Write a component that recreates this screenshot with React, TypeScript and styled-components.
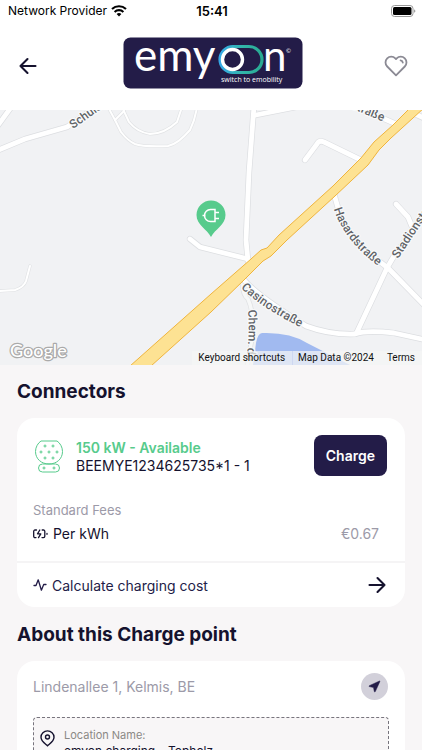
import React from "react";
import styled, { createGlobalStyle } from "styled-components";

const navy = "#231c48";
const ink = "#15122e";
const green = "#57cb8c";
const muted = "#9c9aa8";

const GlobalStyle = createGlobalStyle`
  *, *::before, *::after { box-sizing: border-box; }
  body { margin: 0; background: #f8f6f7; font-family: Inter, "Liberation Sans", sans-serif; color: ${ink}; }
  button { font: inherit; color: inherit; border: 0; background: none; padding: 0; cursor: pointer; }
  h1, h2, p, dl, dt, dd { margin: 0; font-weight: inherit; }
  svg { display: block; }
`;

const Screen = styled.div`
  display: flex;
  flex-direction: column;
  height: 100vh;
  overflow: hidden;
`;

const StatusBar = styled.div`
  display: grid;
  grid-template-columns: 1fr auto 1fr;
  align-items: center;
  height: 22px;
  padding: 0 6px 0 8px;
  background: #fff;
  color: #000;
  font-size: 12px;
  line-height: 22px;
`;

const Carrier = styled.div`
  display: flex;
  align-items: center;
  gap: 4px;
`;

const Clock = styled.time`
  font-size: 13px;
  font-weight: 600;
`;

const BatterySlot = styled.div`
  justify-self: end;
`;

const TopBar = styled.header`
  display: flex;
  flex: none;
  align-items: flex-start;
  justify-content: space-between;
  height: 88px;
  padding: 15px 13px 0 15px;
  background: #fff;
`;

const Brand = styled.div`
  margin-left: 2px;
`;

const IconButton = styled.button<{ $tone?: string }>`
  display: grid;
  place-items: center;
  width: 26px;
  height: 57px;
  color: ${(p) => p.$tone ?? ink};
`;

const Content = styled.main`
  flex: 1;
  min-height: 0;
  overflow: auto;
  scrollbar-width: none;
`;

const MapFrame = styled.section`
  position: relative;
  height: 255px;
  background: #f1f2f4;

  > svg { width: 100%; height: 100%; }
`;

const Attribution = styled.div`
  position: absolute;
  right: 0;
  bottom: 0;
  display: flex;
  height: 14px;
  font: 10px/14px Roboto, sans-serif;
  color: #111;
`;

const MapNote = styled.div<{ $divided?: boolean }>`
  padding: 0 7px 0 5px;
  background: rgba(245, 245, 245, 0.72);
  border-left: 1px solid ${(p) => (p.$divided ? "rgba(200, 210, 240, 0.7)" : "transparent")};
  white-space: nowrap;

  a { color: inherit; text-decoration: none; }
  button { line-height: 14px; }
`;

const Section = styled.section`
  padding: 0 17px 1px;
`;

const Heading = styled.h2`
  padding: 15px 0 14px;
  font-size: 19px;
  font-weight: 700;
  line-height: 24px;
`;

const Card = styled.div`
  background: #fff;
  border-radius: 18px;
`;

const CardBody = styled.div`
  padding: 17px 18px 13px 16px;
`;

const ConnectorRow = styled.div`
  display: flex;
  align-items: center;
  gap: 10px;
`;

const ConnectorInfo = styled.div`
  flex: 1;
  margin-left: 1px;
  padding-top: 2px;
  font-size: 14px;
  line-height: 18px;
  white-space: nowrap;
`;

const Availability = styled.p`
  color: ${green};
  font-weight: 600;
`;

const ChargeButton = styled.button`
  height: 41px;
  padding: 0 12px;
  border-radius: 8px;
  background: ${navy};
  color: #fff;
  font-size: 14px;
  font-weight: 600;
`;

const Fees = styled.div`
  padding-top: 24px;
  font-size: 14px;
  line-height: 20px;
`;

const FeesTitle = styled.p`
  color: ${muted};
  font-size: 13px;
`;

const FeeRow = styled.dl`
  display: flex;
  align-items: center;
  justify-content: space-between;
  height: 28px;
  padding-right: 8px;

  dt { display: flex; align-items: center; gap: 5px; }
  dd { color: ${muted}; }
`;

const CalculateButton = styled.button`
  display: flex;
  align-items: center;
  gap: 5px;
  width: 100%;
  height: 46px;
  padding: 0 18px 0 16px;
  border-top: 2px solid #f5f4f5;
  color: ${navy};
  font-size: 14px;
  text-align: left;

  span { flex: 1; }
`;

const AddressRow = styled.div`
  display: flex;
  align-items: center;
  justify-content: space-between;
  padding: 12px 17px 17px 16px;
  color: ${muted};
  font-size: 14px;
`;

const NavigateButton = styled.button`
  display: grid;
  place-items: center;
  width: 27px;
  height: 27px;
  border-radius: 50%;
  background: #d2d0da;
  color: ${navy};
`;

const LocationBox = styled.div`
  display: flex;
  gap: 9px;
  margin: 0 16px 16px;
  padding: 9px 6px;
  border: 1px dashed #77747d;
  border-radius: 4px;
  background: #f8f6f7;
  font-size: 12px;
  line-height: 16px;

  svg { margin-top: 3px; }
  dt { color: #8b8985; font-size: 11px; }
`;

const Wifi = () => (
  <svg width="16" height="12" viewBox="0 0 16 12" fill="none" stroke="#000" strokeWidth="2.1" aria-hidden="true">
    <path d="M1 4.1a10.2 10.2 0 0 1 14 0M3.6 6.9a6.4 6.4 0 0 1 8.8 0" />
    <path d="M5.6 9.1a3.7 3.7 0 0 1 4.8 0L8 11.6z" fill="#000" stroke="none" />
  </svg>
);

const Battery = () => (
  <svg width="25" height="12" viewBox="0 0 25 12" aria-hidden="true">
    <rect x="0.5" y="0.5" width="21.5" height="11" rx="3" fill="none" stroke="#999" />
    <rect x="2" y="2" width="18.5" height="8" rx="1.5" />
    <path d="M23.3 4.2q2 1.8 0 3.6z" fill="#777" />
  </svg>
);

const Arrow = ({ back = false }: { back?: boolean }) => (
  <svg width="20" height="20" viewBox="0 0 20 20" fill="none" stroke={ink} strokeWidth="2.1" strokeLinecap="round" strokeLinejoin="round" aria-hidden="true">
    <path d={back ? "M17.5 10H2.5M9.5 3L2.5 10l7 7" : "M2.5 10h15M10.5 3l7 7-7 7"} />
  </svg>
);

const Heart = () => (
  <svg width="24" height="22" viewBox="0 0 24 22" fill="none" stroke="#8b8a94" strokeWidth="1.8" strokeLinecap="round" strokeLinejoin="round" aria-hidden="true">
    <path d="M12 20.3L3.2 11.5a5.7 5.7 0 0 1 0-8.1 5.7 5.7 0 0 1 8.1 0L12 4.1l.7-.7a5.7 5.7 0 0 1 8.1 8.1z" />
    <path d="M16.6 5.3a2.6 2.6 0 0 1 2.2 2.3" />
  </svg>
);

const Logo = () => (
  <svg width="180" height="52" viewBox="0 0 180 52" role="img" aria-label="emyoon, switch to emobility">
    <defs>
      <linearGradient id="loop" x1="0" x2="1">
        <stop offset="0" stopColor="#35a8e6" />
        <stop offset="0.55" stopColor="#32b6a9" />
        <stop offset="1" stopColor="#28aa92" />
      </linearGradient>
    </defs>
    <rect x="0.5" y="0.5" width="179" height="51" rx="7" fill={navy} />
    <g fill="#fff" fontFamily="Lato, sans-serif">
      <text x="11" y="34" fontSize="44">emy</text>
      <text x="140" y="34" fontSize="42">n</text>
      <text x="163" y="16" fontSize="6">©</text>
      <text x="98" y="45" fontSize="7" fontFamily="Open Sans, sans-serif">switch to emobility</text>
    </g>
    <rect x="97" y="9.5" width="42" height="26" rx="13" fill={navy} stroke="url(#loop)" strokeWidth="3.2" />
    <circle cx="109.5" cy="22.5" r="10" fill={navy} stroke="#fff" strokeWidth="3.4" />
  </svg>
);

const roads = [
  "M-4 18L12-4",
  "M-4 41L25 29L67 17L98-4",
  "M254-4L249 62L246 130L248 151",
  "M256 5L296-3",
  "M305 50L317 34Q319 30 324 32L361 50",
  "M350-6L396 14",
  "M415 4L428 10",
  "M190 129L200 137L248 149",
  "M334 84L340 105Q352 132 388 158L426 197",
  "M396 94L408 107L413 119",
  "M428 99L394 146L387 158L357 222",
  "M244 170Q256 185 306 216Q330 225 355 224Q366 220 394 223L426 230",
];

const lanes = [
  "M108-3L115 10L121 22Q128 31 135 34Q143 37 168 36Q178 34 190 20Q195 10 197-3",
  "M122-3L129 12Q137 22 150 24Q164 24 177 12L182-3",
  "M115 10L124 1",
  "M-2 181L15 180Q24 177 26 171L30 156",
];

const labels = [
  { id: "schul", d: "M73 19L118-13", text: "Schulstraße", start: 0 },
  { id: "strasse", d: "M348-3L396 17", text: "straße", start: 3 },
  { id: "hasard", d: "M334 99Q344 132 386 162", text: "Hasardstraße", start: 0 },
  { id: "stadion", d: "M398 149L438 89", text: "Stadionstraße", start: 0 },
  { id: "casino", d: "M241 178Q264 200 310 222", text: "Casinostraße", start: 0 },
  { id: "chem", d: "M248 200Q251 230 243 270", text: "Chem. de", start: 0 },
];

const StreetMap = () => (
  <svg viewBox="0 0 422 255" preserveAspectRatio="xMidYMid slice" role="img" aria-label="Map around the charge point">
    <path d="M253 255L256 233Q258 223 262 223Q290 222 307 233L350 255z" fill="#a1baf0" />
    <g fill="none" strokeLinejoin="round" strokeLinecap="round">
      <path d="M243 173Q242 184 248 189Q255 205 252 228L247 258" stroke="#dfe1e3" strokeWidth="5" />
      <path d="M243 173Q242 184 248 189Q255 205 252 228L247 258" stroke="#f7f8f8" strokeWidth="3.5" />
      {lanes.map((d) => <path key={d} d={d} stroke="#e0e2e4" strokeWidth="3.2" />)}
      {lanes.map((d) => <path key={d} d={d} stroke="#fff" strokeWidth="2" />)}
      {roads.map((d) => <path key={d} d={d} stroke="#dcdee1" strokeWidth="6.2" />)}
      {roads.map((d) => <path key={d} d={d} stroke="#fff" strokeWidth="4.8" />)}
    </g>
    <path
      d="M130 256L211 184L251 149L261 140L267 138L279 125L333 76L361 48L374 32L393 15L410-2H424L391 28L379 40L368 55L335 86L287 130L271 146L263 151L244 170L211 202L151 256z"
      fill="#fde293" stroke="#efb43d" strokeWidth="1"
    />
    <g fill="#606367" stroke="#f8f9fa" strokeWidth="2.5" strokeLinejoin="round" paintOrder="stroke" fontFamily="Roboto, sans-serif" fontSize="12" fontWeight="500">
      {labels.map((l) => (
        <React.Fragment key={l.id}>
          <path id={l.id} d={l.d} fill="none" stroke="none" />
          <text><textPath href={`#${l.id}`} startOffset={l.start}>{l.text}</textPath></text>
        </React.Fragment>
      ))}
    </g>
    <g>
      <path d="M211 127C207 119 196.500 115 196.500 105A14.500 14.500 0 0 1 225.500 105C225.500 115 215 119 211 127z" fill={green} />
      <g fill="none" stroke="#fff" strokeWidth="1.5">
        <path d="M215 99.500h-4.500a6 6 0 0 0 0 12H215zM202.500 105.500h3M215 102.500h4M215 108.500h4" />
      </g>
    </g>
    <text x="10" y="247" fontFamily="Lato, sans-serif" fontSize="18" fontWeight="500" fill="#fff" stroke="#aaa" strokeWidth="2.500" strokeLinejoin="round" paintOrder="stroke">Google</text>
  </svg>
);

const pins = [[11, 6], [19, 6], [7, 12], [15, 12], [23, 12], [11, 18], [19, 18], [10, 28], [20, 28]];

const ConnectorIcon = () => (
  <svg width="32" height="34" viewBox="0 0 32 34" fill="none" stroke={green} strokeWidth="1" aria-hidden="true">
    <g transform="translate(1 1)">
      <path d="M7 1h16c3 2 5.500 6 5.500 10.500C28.500 19 22.500 24 15 24S1.500 19 1.500 11.500C1.500 7 4 3 7 1z" />
      <rect x="4.500" y="24" width="21" height="8" rx="4" />
      {pins.map(([x, y]) => <circle key={`${x}-${y}`} cx={x} cy={y} r="1" />)}
    </g>
  </svg>
);

const BatteryCharging = () => (
  <svg width="15" height="12" viewBox="0 0 15 12" fill="none" stroke={ink} strokeWidth="1.300" strokeLinecap="round" strokeLinejoin="round" aria-hidden="true">
    <path d="M3.500 2H2a1.300 1.300 0 0 0-1.300 1.300v5A1.300 1.300 0 0 0 2 9.600h1M9.200 2h1.300a1.300 1.300 0 0 1 1.300 1.300v5a1.300 1.300 0 0 1-1.300 1.300H9M14 5.300v1M6.800 2L4.500 5.800h3.300L5.500 9.600" />
  </svg>
);

const Pulse = () => (
  <svg width="14" height="14" viewBox="0 0 14 14" fill="none" stroke={navy} strokeWidth="1.300" strokeLinecap="round" strokeLinejoin="round" aria-hidden="true">
    <path d="M1 7.500h2l2.200-5.700 3.200 10.400 2.300-5.700H13" />
  </svg>
);

const NavArrow = () => (
  <svg width="13" height="13" viewBox="0 0 13 13" aria-hidden="true">
    <path d="M12 1.200L7.300 11.600Q6.800 12.300 6.300 11.600L5.500 7.500 1.300 6.600Q.6 6.100 1.300 5.700L11.500 1z" fill="currentColor" stroke="currentColor" strokeWidth="0.500" strokeLinejoin="round" />
  </svg>
);

const Pin = () => (
  <svg width="15" height="17" viewBox="0 0 15 17" fill="none" stroke={ink} strokeWidth="1.400" aria-hidden="true">
    <path d="M7.500 15.800C6.200 14.300 1 11.500 1 7.200a6.500 6.300 0 0 1 13 0c0 4.300-5.200 7.100-6.500 8.600z" />
    <circle cx="7.500" cy="7" r="2" />
  </svg>
);

export default function App() {
  return (
    <Screen>
      <GlobalStyle />
      <StatusBar>
        <Carrier>Network Provider <Wifi /></Carrier>
        <Clock>15:41</Clock>
        <BatterySlot><Battery /></BatterySlot>
      </StatusBar>
      <TopBar>
        <IconButton aria-label="Back"><Arrow back /></IconButton>
        <Brand><Logo /></Brand>
        <IconButton aria-label="Add to favourites" $tone={muted}><Heart /></IconButton>
      </TopBar>
      <Content>
        <MapFrame>
          <StreetMap />
          <Attribution>
            <MapNote><button type="button">Keyboard shortcuts</button></MapNote>
            <MapNote $divided>Map Data ©2024</MapNote>
            <MapNote><a href="#terms">Terms</a></MapNote>
          </Attribution>
        </MapFrame>
        <Section>
          <Heading>Connectors</Heading>
          <Card>
            <CardBody>
              <ConnectorRow>
                <ConnectorIcon />
                <ConnectorInfo>
                  <Availability>150 kW - Available</Availability>
                  <p>BEEMYE1234625735*1 - 1</p>
                </ConnectorInfo>
                <ChargeButton>Charge</ChargeButton>
              </ConnectorRow>
              <Fees>
                <FeesTitle>Standard Fees</FeesTitle>
                <FeeRow>
                  <dt><BatteryCharging />Per kWh</dt>
                  <dd>€0.67</dd>
                </FeeRow>
              </Fees>
            </CardBody>
            <CalculateButton>
              <Pulse />
              <span>Calculate charging cost</span>
              <Arrow />
            </CalculateButton>
          </Card>
        </Section>
        <Section>
          <Heading>About this Charge point</Heading>
          <Card>
            <AddressRow>
              <p>Lindenallee 1, Kelmis, BE</p>
              <NavigateButton aria-label="Navigate"><NavArrow /></NavigateButton>
            </AddressRow>
            <LocationBox>
              <Pin />
              <dl>
                <dt>Location Name:</dt>
                <dd>emyon charging – Topholz</dd>
              </dl>
            </LocationBox>
          </Card>
        </Section>
      </Content>
    </Screen>
  );
}
